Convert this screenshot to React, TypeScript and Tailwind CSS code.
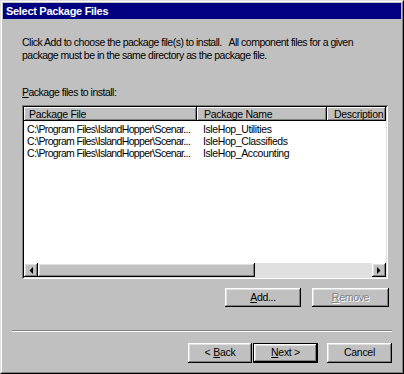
const raised =
  "shadow-[inset_-1px_-1px_#000,inset_1px_1px_#fff,inset_-2px_-2px_#808080,inset_2px_2px_#dfdfdf]";
const sunken =
  "shadow-[inset_1px_1px_#808080,inset_-1px_-1px_#fff,inset_2px_2px_#000,inset_-2px_-2px_#dfdfdf]";
const headerCell =
  "shadow-[inset_-1px_-1px_#000,inset_1px_1px_#fff,inset_-2px_-2px_#808080]";

const rows = [
  ["C:\\Program Files\\IslandHopper\\Scenar...", "IsleHop_Utilities"],
  ["C:\\Program Files\\IslandHopper\\Scenar...", "IsleHop_Classifieds"],
  ["C:\\Program Files\\IslandHopper\\Scenar...", "IsleHop_Accounting"],
];

function Button({
  children,
  className = "",
  disabled = false,
}: {
  children: React.ReactNode;
  className?: string;
  disabled?: boolean;
}) {
  return (
    <div
      className={`flex items-center justify-center whitespace-nowrap bg-[#c0c0c0] ${raised} ${
        disabled ? "text-[#808080] [text-shadow:1px_1px_#fff]" : "text-black"
      } ${className}`}
    >
      {children}
    </div>
  );
}

function Arrow({ dir }: { dir: "left" | "right" }) {
  return (
    <div className={`flex h-[14px] w-[14px] shrink-0 items-center justify-center bg-[#c0c0c0] ${raised}`}>
      <svg width="4" height="7" viewBox="0 0 4 7">
        {dir === "left" ? (
          <polygon points="4,0 4,7 0.5,3.5" fill="#000" />
        ) : (
          <polygon points="0,0 0,7 3.5,3.5" fill="#000" />
        )}
      </svg>
    </div>
  );
}

export default function App() {
  return (
    <div className="h-[374px] w-[404px] overflow-hidden border border-t-[#dfdfdf] border-l-[#dfdfdf] border-r-black border-b-black bg-[#c0c0c0] font-['Liberation_Sans',Arial,sans-serif] text-[10.5px] tracking-[-0.5px]">
      <div className="flex h-full flex-col border border-t-white border-l-white border-r-[#808080] border-b-[#808080] p-px">
        <div className="flex h-[16px] shrink-0 items-center bg-[#000080] pl-[3px] text-[11px] font-bold tracking-[-0.3px] text-white">
          Select Package Files
        </div>

        <div className="flex flex-col">
          <div className="ml-[19px] mt-[17px] whitespace-pre leading-[13px] text-black">
            <div>Click Add to choose the package file(s) to install.   All component files for a given</div>
            <div>package must be in the same directory as the package file.</div>
          </div>

          <div className="ml-[19px] mt-[24px] leading-[13px] text-black">
            <span className="underline">P</span>ackage files to install:
          </div>

          <div className={`ml-[19px] mt-[6px] flex h-[174px] w-[366px] flex-col bg-white p-[2px] ${sunken}`}>
            <div className="flex h-[14px] shrink-0 whitespace-nowrap leading-[14px] tracking-[-0.3px] text-black">
              <div className={`w-[173px] shrink-0 bg-[#c0c0c0] pl-[5px] ${headerCell}`}>Package File</div>
              <div className={`w-[130px] shrink-0 bg-[#c0c0c0] pl-[7px] ${headerCell}`}>Package Name</div>
              <div className={`flex-1 overflow-hidden bg-[#c0c0c0] pl-[7px] ${headerCell}`}>Description</div>
            </div>
            <div className="flex-1 whitespace-nowrap pt-[2px] leading-[12px] text-black">
              {rows.map((r, i) => (
                <div key={i} className="flex">
                  <div className="w-[173px] shrink-0 pl-[3px] tracking-[-0.65px]">{r[0]}</div>
                  <div className="pl-[6px] tracking-[-0.4px]">{r[1]}</div>
                </div>
              ))}
            </div>
            <div className="flex h-[14px] shrink-0">
              <Arrow dir="left" />
              <div className={`h-[14px] w-[217px] shrink-0 bg-[#c0c0c0] ${raised}`} />
              <div className="flex-1 bg-[#e0e0e0]" />
              <Arrow dir="right" />
            </div>
          </div>

          <div className="ml-[222px] mt-[9px] flex gap-[11px] tracking-[-0.3px]">
            <Button className="h-[19px] w-[76px]">
              <span className="underline">A</span>dd...
            </Button>
            <Button className="h-[19px] w-[77px]" disabled>
              <span className="underline">R</span>emove
            </Button>
          </div>

          <div className="ml-[9px] mt-[23px] h-[2px] w-[380px] border-t border-t-[#808080] border-b border-b-white" />

          <div className="ml-[185px] mt-[11px] flex tracking-[-0.3px]">
            <Button className="h-[20px] w-[64px]">
              &lt; <span className="ml-[3px] underline">B</span>ack
            </Button>
            <div className="ml-px h-[20px] w-[65px] border border-black">
              <Button className="h-full w-full">
                <span className="underline">N</span>ext &gt;
              </Button>
            </div>
            <Button className="ml-[9px] h-[20px] w-[65px]">Cancel</Button>
          </div>
        </div>
      </div>
    </div>
  );
}
